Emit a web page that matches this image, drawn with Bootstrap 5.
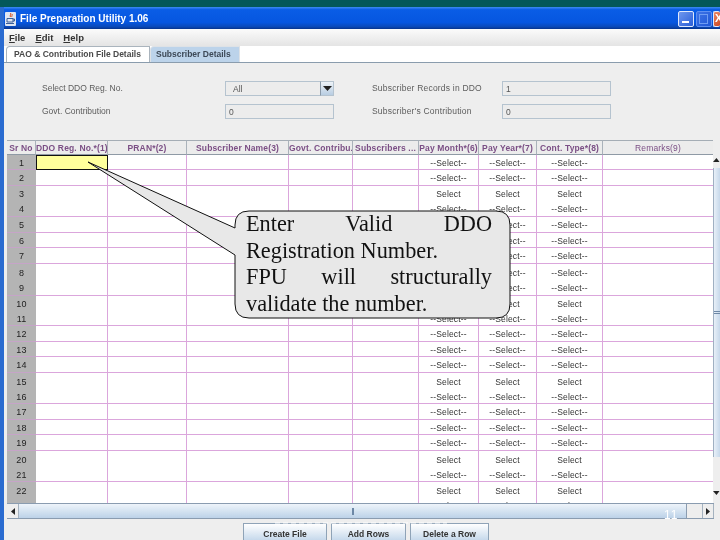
<!DOCTYPE html>
<html lang="en">
<head>
    <meta charset="UTF-8">
    <title>File Preparation Utility 1.06</title>
    <link href="https://cdn.jsdelivr.net/npm/bootstrap@5.3.0/dist/css/bootstrap.min.css" rel="stylesheet">
    <style>
        html, body { width: 720px; height: 540px; overflow: hidden; margin: 0; background: #04585a; }
        body { font-family: "Liberation Sans", Arial, sans-serif; }
        .screen { position: relative; width: 720px; height: 540px; padding-top: 7px; filter: blur(.3px); }
        .app-window { height: 533px; border-left: 4px solid #2a6bd0; background: #eeeeee; overflow: hidden; }
        .app-window > * { flex-shrink: 0; }
        .title-bar { height: 22px; margin-left: -4px; padding: 3px 0 2px 5px; background: linear-gradient(#3f8cf3 0, #0a5de6 12%, #0656e0 70%, #0a49b8 90%, #06338c 100%); color: #fff; font-size: 10px; font-weight: 700; }
        .win-btn { width: 16px; height: 16px; border: 1px solid #dfe8fb; border-radius: 2px; background: linear-gradient(135deg, #6f97ee, #2b5fd8); margin-right: 2px; }
        .win-btn-min span { width: 7px; height: 2px; background: #fff; margin: 9px 0 0 3px; display: block; }
        .win-btn-max { border-color: #5f8ff0; background: linear-gradient(135deg, #3f74e6, #1f57d6); margin-right: 1px; }
        .win-btn-max span { width: 9px; height: 10px; border: 1px solid #6f9cf2; margin: 2px 0 0 2px; display: block; }
        .win-btn-close { width: 7px; margin-right: 0; border-right: 0; background: linear-gradient(135deg, #e98a6a, #cf4a24); color: #fff; font-size: 11px; line-height: 13px; font-weight: 700; overflow: hidden; padding-left: 1px; }
        .menu-strip { height: 17px; padding-left: 5px; background: linear-gradient(#fbfbfb, #e4e4e4); color: #333; font-size: 9.5px; font-weight: 700; line-height: 17px; gap: 10px; }
        .tab-strip { height: 17px; background: #fff; padding-left: 2px; border-bottom: 1px solid #8a9cad !important; }
        .tab-strip .nav-link { height: 16px; margin: 0; padding: 0 0 0 7px; border: 1px solid #aab4bd; border-bottom: 0; border-radius: 4px 0 0 0; background: #fff; color: #4a4a4a; font-size: 8.5px; font-weight: 700; line-height: 15px; }
        .tab-strip .tab-one { width: 144px; }
        .tab-strip .nav-link.active { width: 90px; padding-left: 5px; background: #bcd3ea; color: #3c4856; }
        .form-panel { height: 77px; padding: 18px 0 0 38px; grid-template-columns: 183px 109px 38px 130px 109px; grid-template-rows: 15px 15px; row-gap: 8px; font-size: 8.5px; color: #5c5c5c; line-height: 15px; }
        .form-panel .form-control { height: 15px; min-height: 0; padding: 0 0 0 3px; border: 1px solid #b5c3cf; border-radius: 0; background: #ececec; color: #555; font-size: 8.5px; line-height: 13px; box-shadow: none; }
        .form-panel .combo-input { padding-left: 7px; }
        .label-wide { letter-spacing: .2px; }
        .combo-arrow { width: 14px; height: 15px; padding: 0; border: 1px solid #b5c3cf; border-left: 1px solid #8a99a8; border-radius: 0; background: linear-gradient(#eef3f8, #b8cde2); line-height: 10px; }
        .grid-area { height: 363px; margin-left: 3px; }
        .grid-scroll { width: 706px; overflow: hidden; }
        .app-grid { width: 706px; table-layout: fixed; margin: 0; border-collapse: separate; border-spacing: 0; }
        .app-grid col:nth-child(1) { width: 29px; }
        .app-grid col:nth-child(2) { width: 72px; }
        .app-grid col:nth-child(3) { width: 79px; }
        .app-grid col:nth-child(4) { width: 102px; }
        .app-grid col:nth-child(5) { width: 64px; }
        .app-grid col:nth-child(6) { width: 66px; }
        .app-grid col:nth-child(7) { width: 60px; }
        .app-grid col:nth-child(8) { width: 58px; }
        .app-grid col:nth-child(9) { width: 66px; }
        .app-grid col:nth-child(10) { width: 110px; }
        .table.app-grid > * > tr > * { padding: 2px 0 0; border: 0; font-size: 8.5px; line-height: 1; text-align: center; vertical-align: middle; white-space: nowrap; overflow: hidden; color: #333; background: #fff; box-shadow: none; letter-spacing: .15px; }
        .table.app-grid > thead > tr > th { height: 15px; padding-top: 1px; background: #ececec; border-top: 1px solid #a5adb5; border-bottom: 1px solid #8f9aa5; border-right: 1px solid #aab2ba; color: #7b4f85; font-weight: 700; }
        .table.app-grid > thead > tr > th.plain-head { font-weight: 400; border-right: 0; }
        .table.app-grid > tbody > tr > td { border-right: 1px solid #dba6dc; border-bottom: 1px solid #dba6dc; }
        .table.app-grid > tbody > tr > td:last-child { border-right: 0; }
        .table.app-grid > tbody > tr > td.sr-cell { background: #b4b4b4; color: #222; font-size: 9px; border-right: 0; border-bottom-color: #c6a4c8; }
        .table.app-grid > tbody > tr.no-line > td { border-bottom: 0; }
        .table.app-grid > tbody > tr > td.sel-cell { background: #ffff9c; outline: 1.5px solid #111; outline-offset: -1.5px; }
        .v-scroll { width: 7px; padding-top: 15px; background: #eee; }
        .v-thumb { height: 289px; border-left: 1px solid #9fb0c2; background: linear-gradient(90deg, #e8f0f8, #c6d8ea); }
        .v-grip { width: 6px; height: 3px; border-top: 1px solid #6d88a6; border-bottom: 1px solid #6d88a6; }
        .v-arrow-down { margin-top: 32px; }
        .h-scroll { height: 16px; margin-left: 3px; width: 707px; border-top: 1px solid #8a9cb0; border-bottom: 1px solid #8a9cb0; background: #eee; }
        .h-arrow { width: 12px; border-right: 1px solid #a5b2bf; }
        .h-thumb { width: 335px; background: linear-gradient(#eef4fa, #bcd2e8); }
        .h-thumb-two { width: 333px; border-right: 1px solid #8a9cb0; }
        .h-grip { width: 2px; height: 7px; background: #6d88a6; }
        .h-track { width: 15px; }
        .h-arrow-end { width: 12px; border-left: 1px solid #a5b2bf; border-right: 1px solid #a5b2bf; }
        .button-row { padding: 4px 0 0 8px; gap: 4px; }
        .button-row .btn { height: 21px; padding: 0; border: 1px solid #8fa3b7; border-radius: 0; background: linear-gradient(#ffffff, #bcd2e8); color: #333; font-size: 8.5px; font-weight: 700; line-height: 10px; }
        .btn-create { width: 84px; }
        .btn-add { width: 75px; }
        .btn-delete { width: 79px; }
        .callout { position: absolute; left: 0; top: 0; }
        .callout-text { position: absolute; left: 246px; top: 211px; width: 246px; font-family: "Liberation Serif", "Times New Roman", serif; font-size: 22.3px; line-height: 26.6px; color: #111; text-align: justify; }
        .callout-fill { text-align-last: justify; }
        .slide-number { position: absolute; left: 664px; top: 509px; color: #fff; font-size: 12px; line-height: 13px; letter-spacing: 1px; }
        .slide-footer { position: absolute; left: 275px; top: 522px; width: 172px; height: 2px; background: repeating-linear-gradient(90deg, rgba(255,255,255,.5) 0 5px, rgba(255,255,255,.1) 5px 8px); }
    </style>
</head>
<body>
<div class="screen">
    <div class="app-window d-flex flex-column">
        <div class="title-bar d-flex align-items-center">
            <svg width="11" height="14" viewBox="0 0 11 14" class="me-1 flex-shrink-0">
                <rect width="11" height="14" fill="#dfe6f2" rx="1"/>
                <path d="M5.5 1c1.5 1.5-1.5 2.5 0 4M7 2c1 1-1 2 0 3" stroke="#d8531f" fill="none"/>
                <path d="M2 6.5h6v3.5H2zM8 7h1.5v2H8M1 11.5h8" stroke="#3a5f9a" fill="none"/>
            </svg>
            <span class="flex-grow-1">File Preparation Utility 1.06</span>
            <div class="win-btn win-btn-min"><span></span></div>
            <div class="win-btn win-btn-max"><span></span></div>
            <div class="win-btn win-btn-close">X</div>
        </div>
        <div class="menu-strip d-flex">
            <span><u>F</u>ile</span><span><u>E</u>dit</span><span><u>H</u>elp</span>
        </div>
        <ul class="nav nav-tabs tab-strip">
            <li class="nav-item"><a class="nav-link tab-one" href="#">PAO &amp; Contribution File Details</a></li>
            <li class="nav-item"><a class="nav-link active" href="#">Subscriber Details</a></li>
        </ul>
        <div class="form-panel d-grid">
            <span>Select DDO Reg. No.</span>
            <div class="input-group flex-nowrap">
                <input class="form-control combo-input" readonly value="All">
                <button class="btn combo-arrow" type="button">
                    <svg width="9" height="5" viewBox="0 0 9 5" class="d-block mx-auto"><path d="M0 0h9L4.5 5z" fill="#222"/></svg>
                </button>
            </div>
            <span></span>
            <span class="label-wide">Subscriber Records in DDO</span>
            <input class="form-control" readonly value="1">
            <span>Govt. Contribution</span>
            <input class="form-control" readonly value="0">
            <span></span>
            <span class="label-wide">Subscriber's Contribution</span>
            <input class="form-control" readonly value="0">
        </div>
        <div class="grid-area d-flex">
            <div class="grid-scroll">
                <table class="table app-grid">
                    <colgroup>
                        <col><col><col><col><col><col><col><col><col><col>
                    </colgroup>
                    <thead>
                        <tr>
                            <th>Sr No</th><th>DDO Reg. No.*(1)</th><th>PRAN*(2)</th><th>Subscriber Name(3)</th><th>Govt. Contribu...</th><th>Subscribers ...</th><th>Pay Month*(6)</th><th>Pay Year*(7)</th><th>Cont. Type*(8)</th><th class="plain-head">Remarks(9)</th>
                        </tr>
                    </thead>
                    <tbody id="gridRows"></tbody>
                </table>
            </div>
            <div class="v-scroll">
                <svg class="d-block" width="7" height="13" viewBox="0 0 7 13"><path d="M0 7h6.500L3.500 3z" fill="#222"/></svg>
                <div class="v-thumb d-flex align-items-center justify-content-center"><div class="v-grip"></div></div>
                <svg class="d-block v-arrow-down" width="7" height="8" viewBox="0 0 7 8"><path d="M0 2h6.500L3.500 6z" fill="#222"/></svg>
            </div>
        </div>
        <div class="h-scroll d-flex">
            <div class="h-arrow d-flex align-items-center justify-content-center">
                <svg width="4" height="7" viewBox="0 0 4 7"><path d="M4 0v7L0 3.500z" fill="#222"/></svg>
            </div>
            <div class="h-thumb d-flex align-items-center justify-content-end"><div class="h-grip"></div></div>
            <div class="h-thumb h-thumb-two"></div>
            <div class="h-track"></div>
            <div class="h-arrow-end d-flex align-items-center justify-content-center">
                <svg width="4" height="7" viewBox="0 0 4 7"><path d="M0 0v7l4-3.500z" fill="#222"/></svg>
            </div>
        </div>
        <div class="button-row d-flex justify-content-center">
            <button class="btn btn-create" type="button">Create File</button>
            <button class="btn btn-add" type="button">Add Rows</button>
            <button class="btn btn-delete" type="button">Delete a Row</button>
        </div>
    </div>

    <!-- slide callout sits over the grid -->
    <svg class="callout" width="720" height="540" viewBox="0 0 720 540">
        <path d="M88 162 L235 228 V225 Q235 211 249 211 H496 Q510 211 510 225 V304 Q510 318 496 318 H249 Q235 318 235 304 V255 Z" fill="#e8e8e8" stroke="#111" stroke-width="1"/>
    </svg>
    <div class="callout-text">Enter Valid DDO Registration Number.
        <div class="callout-fill">FPU will structurally</div>validate the number.</div>
    <div class="slide-number">11</div>
    <div class="slide-footer"></div>
</div>

<script src="https://cdn.jsdelivr.net/npm/bootstrap@5.3.0/dist/js/bootstrap.bundle.min.js"></script>
<script>
    // row boundaries as measured, the source picture lost some grid lines when it was scaled
    const tops = [155,170,186,201,217,233,248,264,280,296,311,326,342,357,373,389,404,420,435,451,467,482,498,514];
    const noLine = [3, 8, 10, 15, 20, 22];
    const plainSelect = [3, 10, 15, 20, 22];
    let html = '';
    for (let i = 1; i < tops.length; i++) {
        const label = plainSelect.includes(i) ? 'Select' : '--Select--';
        html += `<tr class="${noLine.includes(i) ? 'no-line' : ''}" style="height:${tops[i] - tops[i - 1]}px">`
            + `<td class="sr-cell">${i}</td><td class="${i === 1 ? 'sel-cell' : ''}"></td><td></td><td></td><td></td><td></td>`
            + `<td>${label}</td><td>${label}</td><td>${label}</td><td></td></tr>`;
    }
    document.getElementById('gridRows').innerHTML = html;
</script>
</body>
</html>
